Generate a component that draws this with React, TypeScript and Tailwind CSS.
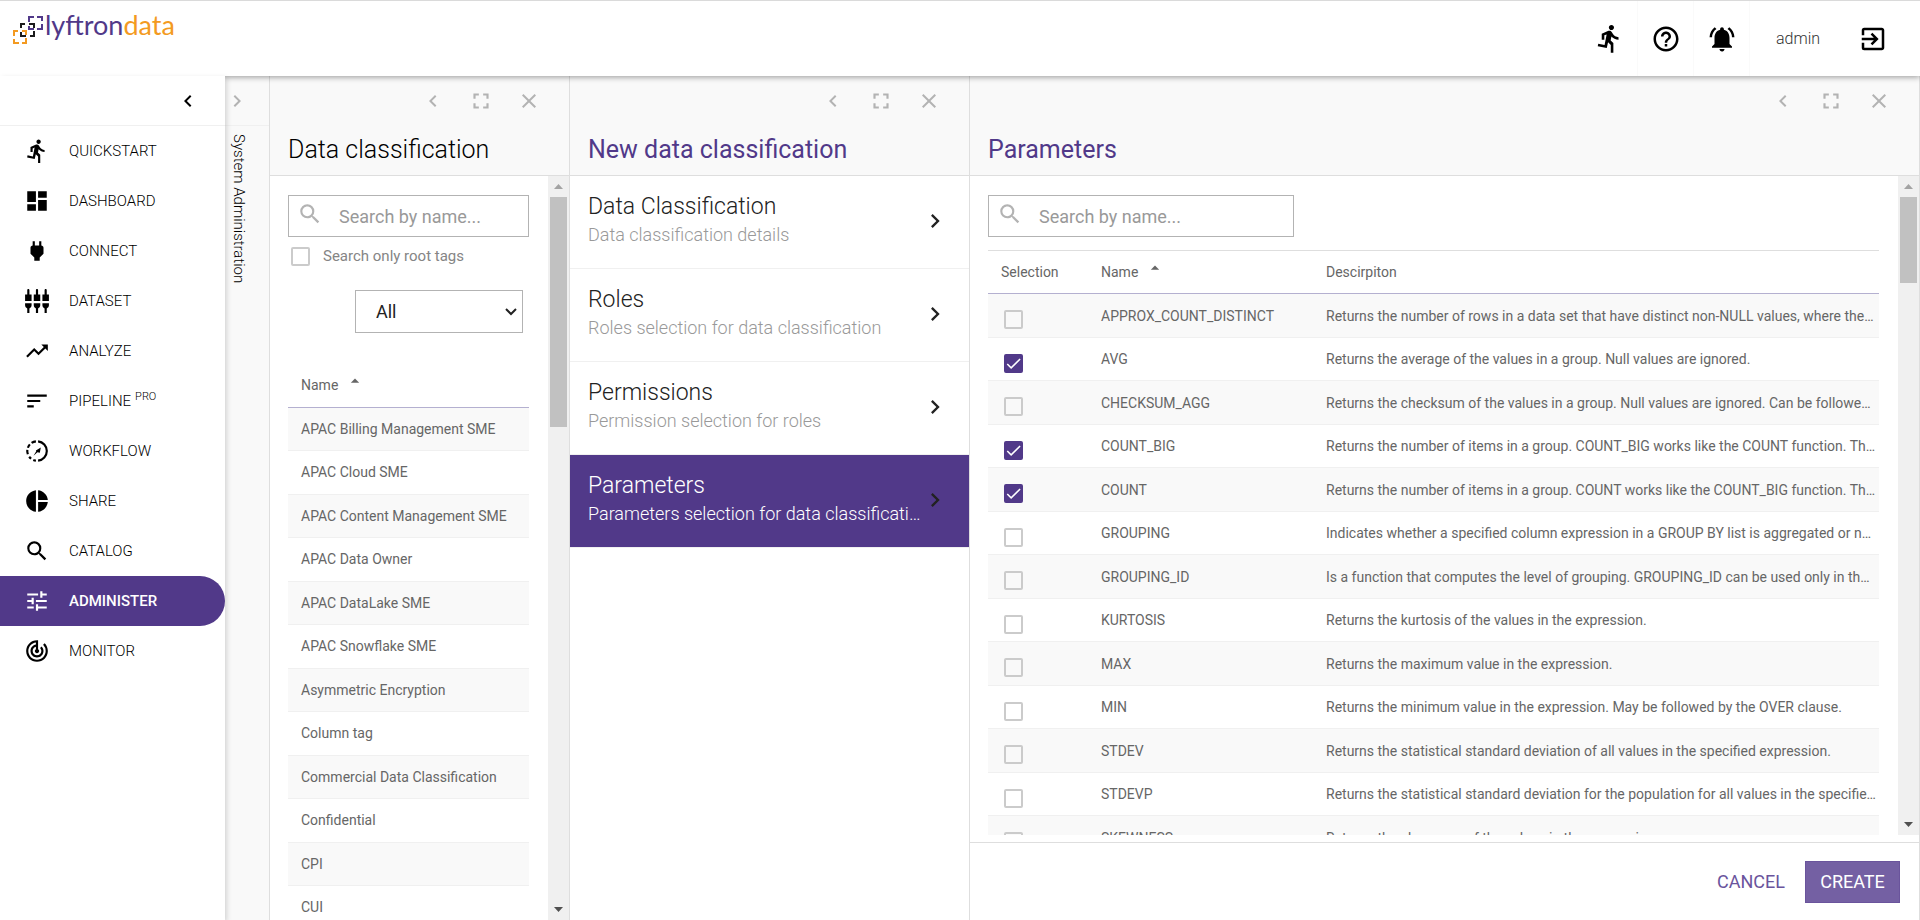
import { useState } from "react";
import {
  MdArrowDropUp,
  MdCheck,
  MdChevronLeft,
  MdChevronRight,
  MdClose,
  MdDashboard,
  MdDirectionsRun,
  MdExitToApp,
  MdFullscreen,
  MdHelpOutline,
  MdNotificationsActive,
  MdPieChart,
  MdPower,
  MdSearch,
  MdSettingsInputComponent,
  MdSort,
  MdTrackChanges,
  MdTrendingUp,
  MdTune,
} from "react-icons/md";
import clsx from "clsx";

const WorkflowIcon = ({ className }: { className?: string }) => (
  <svg viewBox="0 0 24 24" className={className} fill="none" stroke="currentColor" strokeWidth="2">
    <path d="M13 3.05a9 9 0 0 1 0 17.9" />
    <path d="M11 3.05a9 9 0 0 0-4 1.5M5.4 5.9A9 9 0 0 0 3.6 9M3.05 11a9 9 0 0 0 .5 4M4.8 17.3A9 9 0 0 0 6.6 19.1M8.6 20.3a9 9 0 0 0 2.4.65" />
    <path d="m15.5 8.7-.9 5-2.2-.5-3.6 3.2 2.5-4.2-.3-.7z" fill="currentColor" stroke="none" />
  </svg>
);

const navItems = [
  { label: "QUICKSTART", icon: MdDirectionsRun },
  { label: "DASHBOARD", icon: MdDashboard },
  { label: "CONNECT", icon: MdPower },
  { label: "DATASET", icon: MdSettingsInputComponent },
  { label: "ANALYZE", icon: MdTrendingUp },
  { label: "PIPELINE", icon: MdSort, badge: "PRO" },
  { label: "WORKFLOW", icon: WorkflowIcon },
  { label: "SHARE", icon: MdPieChart },
  { label: "CATALOG", icon: MdSearch },
  { label: "ADMINISTER", icon: MdTune },
  { label: "MONITOR", icon: MdTrackChanges },
];

const tags = [
  "APAC Billing Management SME",
  "APAC Cloud SME",
  "APAC Content Management SME",
  "APAC Data Owner",
  "APAC DataLake SME",
  "APAC Snowflake SME",
  "Asymmetric Encryption",
  "Column tag",
  "Commercial Data Classification",
  "Confidential",
  "CPI",
  "CUI",
];

const steps = [
  { title: "Data Classification", text: "Data classification details" },
  { title: "Roles", text: "Roles selection for data classification" },
  { title: "Permissions", text: "Permission selection for roles" },
  { title: "Parameters", text: "Parameters selection for data classification" },
];

const parameters = [
  { name: "APPROX_COUNT_DISTINCT", text: "Returns the number of rows in a data set that have distinct non-NULL values, where the expression is evaluated" },
  { name: "AVG", text: "Returns the average of the values in a group. Null values are ignored." },
  { name: "CHECKSUM_AGG", text: "Returns the checksum of the values in a group. Null values are ignored. Can be followed by the OVER clause." },
  { name: "COUNT_BIG", text: "Returns the number of items in a group. COUNT_BIG works like the COUNT function. The only difference is the type." },
  { name: "COUNT", text: "Returns the number of items in a group. COUNT works like the COUNT_BIG function. The only difference is the type." },
  { name: "GROUPING", text: "Indicates whether a specified column expression in a GROUP BY list is aggregated or not. GROUPING returns 1 or 0." },
  { name: "GROUPING_ID", text: "Is a function that computes the level of grouping. GROUPING_ID can be used only in the SELECT list." },
  { name: "KURTOSIS", text: "Returns the kurtosis of the values in the expression." },
  { name: "MAX", text: "Returns the maximum value in the expression." },
  { name: "MIN", text: "Returns the minimum value in the expression. May be followed by the OVER clause." },
  { name: "STDEV", text: "Returns the statistical standard deviation of all values in the specified expression." },
  { name: "STDEVP", text: "Returns the statistical standard deviation for the population for all values in the specified expression." },
  { name: "SKEWNESS", text: "Returns the skewness of the values in the expression." },
];

const Logo = () => (
  <a href="#" aria-label="lyftrondata" className="flex items-start pt-3 pl-3">
    <svg width="33" height="32" viewBox="0 0 33 32" fill="none" strokeWidth="2">
      <path d="M17 9V4h5M25 4h5v4M30 11v5h-5M22 16h-5v-3" stroke="#513989" />
      <path d="M9 15v-4h4M17 11h5v4M22 18v5h-4M14 23H9v-4" stroke="#1b1b1b" />
      <path d="M2 23v-5h4M14 25v5h-4M7 30H2v-4M10 18h4v4" stroke="#f39a21" />
    </svg>
    <span className="font-[Lato] text-[27px] leading-6 text-[#513989]">
      lyftron<span className="text-[#f39a21]">data</span>
    </span>
  </a>
);

const Checkbox = ({ label, checked, onChange, hideLabel }: any) => (
  <label className="flex items-center gap-[13px] text-[15px] leading-5 text-[#858585]">
    <span className="relative flex">
      <input
        type="checkbox"
        aria-label={label}
        checked={checked}
        onChange={onChange}
        className="peer size-[19px] appearance-none rounded-xs border-2 border-[#cbcbcb] checked:border-[#513989] checked:bg-[#513989]"
      />
      <MdCheck className="pointer-events-none absolute inset-0 hidden size-[19px] text-white peer-checked:block" />
    </span>
    {!hideLabel && label}
  </label>
);

const SearchBox = ({ className }: { className?: string }) => (
  <div className={clsx("flex h-[42px] items-center border border-[#b3b3b3] pl-2", className)}>
    <MdSearch className="mb-1 size-[26px] shrink-0 text-[#b3b3b3]" />
    <input
      type="text"
      aria-label="Search by name"
      placeholder="Search by name..."
      className="w-full min-w-0 pt-0.5 pl-4 text-lg leading-6 outline-none placeholder:text-[#999]"
    />
  </div>
);

const PanelHeader = ({ title, light }: { title: string; light?: boolean }) => (
  <div className="h-[100px] shrink-0 border-b border-[#dedede] bg-[#f9f9f9] pr-7 pl-[18px]">
    <div className="flex h-[50px] items-center justify-end gap-[23px] text-[#b3b3b3]">
      <button aria-label="Collapse"><MdChevronLeft className="size-6" /></button>
      <button aria-label="Fullscreen"><MdFullscreen className="size-[26px]" /></button>
      <button aria-label="Close"><MdClose className="size-6" /></button>
    </div>
    <h2 className={clsx("text-[25px] leading-[48px]", light ? "font-light text-black" : "font-normal text-[#513989]")}>
      {title}
    </h2>
  </div>
);

const ScrollBar = ({ thumb }: { thumb: string }) => (
  <div className="flex w-[21px] shrink-0 flex-col items-center bg-[#f0f0f0]">
    <span className="flex h-[21px] items-center">
      <svg width="9" height="5" viewBox="0 0 9 5" fill="#a3a3a3"><path d="M0 5 4.5 0 9 5z" /></svg>
    </span>
    <span className={clsx("w-[17px] bg-[#c1c1c1]", thumb)} />
    <span className="mt-auto flex h-[21px] items-center">
      <svg width="9" height="5" viewBox="0 0 9 5" fill="#505050"><path d="M0 0 4.5 5 9 0z" /></svg>
    </span>
  </div>
);

const SortLabel = () => (
  <button className="flex items-center gap-[9px]">
    Name <MdArrowDropUp className="mb-2 size-4 scale-125" />
  </button>
);

export default function App() {
  const [selected, setSelected] = useState(["AVG", "COUNT_BIG", "COUNT"]);
  const [rootOnly, setRootOnly] = useState(false);

  const toggle = (name: string) =>
    setSelected((prev) => (prev.includes(name) ? prev.filter((n) => n !== name) : [...prev, name]));

  return (
    <div className="flex h-screen flex-col overflow-hidden bg-white font-[Roboto,sans-serif]">
      {/* Top bar */}
      <header className="relative z-10 flex h-[76px] shrink-0 justify-between border-t border-[#dadada] bg-white shadow-[0_1px_6px_rgba(0,0,0,0.4)]">
        <Logo />
        <div className="flex items-stretch">
          <button aria-label="Quickstart" className="w-14 border-r border-[#fafafa] pl-3"><MdDirectionsRun className="size-[31px]" /></button>
          <button aria-label="Help" className="flex w-14 items-center justify-center border-r border-[#fafafa]"><MdHelpOutline className="size-[30px]" /></button>
          <button aria-label="Notifications" className="flex w-14 items-center justify-center border-r border-[#fafafa]"><MdNotificationsActive className="size-[30px]" /></button>
          <a href="#" className="flex w-24 items-center justify-center text-base font-light text-[#333]">admin</a>
          <button aria-label="Log out" className="flex w-[74px] items-center pl-3"><MdExitToApp className="size-[30px]" /></button>
        </div>
      </header>

      <div className="flex min-h-0 flex-1">
        {/* Main navigation */}
        <aside className="relative z-20 w-[225px] shrink-0 bg-white shadow-[2px_2px_5px_rgba(0,0,0,0.15)]">
          <div className="flex h-[50px] items-center justify-end border-b border-[#f0f0f0] pr-[25px]">
            <button aria-label="Collapse menu"><MdChevronLeft className="size-6" /></button>
          </div>
          <nav>
            {navItems.map(({ label, icon: Icon, badge }) => (
              <a
                key={label}
                href="#"
                className={clsx(
                  "flex h-[50px] items-center gap-[19px] pl-6 text-[15px]",
                  label === "ADMINISTER" ? "rounded-r-full bg-[#513989] font-medium text-white" : "font-light text-black"
                )}
              >
                <Icon className="size-[26px]" />
                <span>
                  {label}
                  {badge && <sup className="ml-1 text-[11px]">{badge}</sup>}
                </span>
              </a>
            ))}
          </nav>
        </aside>

        {/* Collapsed panel */}
        <section className="w-[45px] shrink-0 border-r border-[#dedede] bg-[#f9f9f9]">
          <div className="flex h-[50px] items-center border-b border-[#f0f0f0]">
            <button aria-label="Expand"><MdChevronRight className="size-6 text-[#b3b3b3]" /></button>
          </div>
          <h2 className="pt-2 pl-1 text-[15px] leading-5 font-light [writing-mode:vertical-rl]">System Administration</h2>
        </section>

        {/* Classification list */}
        <section className="flex w-[300px] shrink-0 flex-col border-r border-[#dedede]">
          <PanelHeader title="Data classification" light />
          <div className="flex min-h-0 flex-1">
            <div className="min-w-0 flex-1 overflow-hidden pt-[19px] pr-[19px] pl-[18px]">
              <SearchBox />
              <div className="pt-[9px] pl-[3px]">
                <Checkbox label="Search only root tags" checked={rootOnly} onChange={() => setRootOnly(!rootOnly)} />
              </div>
              <div className="relative mt-6 mr-[6px] ml-[67px]">
                <select aria-label="Filter" className="h-[43px] w-full appearance-none border border-[#b3b3b3] pl-5 text-lg text-[#222]">
                  <option>All</option>
                </select>
                <svg viewBox="0 0 12 8" className="pointer-events-none absolute top-[18px] right-[6px] h-2 w-3" fill="none" stroke="#222" strokeWidth="2">
                  <path d="m1 1 5 5 5-5" />
                </svg>
              </div>
              <table className="mt-[30px] w-full table-fixed text-left text-sm text-[#666]">
                <thead>
                  <tr className="h-11 border-b border-[#b4b0d0]">
                    <th className="pl-[13px] font-normal"><SortLabel /></th>
                  </tr>
                </thead>
                <tbody>
                  {tags.map((tag) => (
                    <tr key={tag} className="h-11 border-b border-[#f0f0f0] odd:h-[43px] odd:bg-[#f9f9f9]">
                      <td className="pl-[13px] whitespace-nowrap">{tag}</td>
                    </tr>
                  ))}
                </tbody>
              </table>
            </div>
            <ScrollBar thumb="h-[230px]" />
          </div>
        </section>

        {/* Steps */}
        <section className="w-[400px] shrink-0 border-r border-[#dedede]">
          <PanelHeader title="New data classification" />
          {steps.map(({ title, text }) => {
            const active = title === "Parameters";
            return (
              <button
                key={title}
                className={clsx(
                  "flex h-[93px] w-full items-center border-b border-[#f0f0f0] pr-5 pb-0.5 pl-[18px] text-left font-light",
                  active ? "bg-[#513989] text-white" : "text-[#222]"
                )}
              >
                <span className="min-w-0 flex-1">
                  <span className="block text-[23px] leading-7">{title}</span>
                  <span className={clsx("block truncate text-lg leading-7", active ? "text-white" : "text-[#999]")}>{text}</span>
                </span>
                <MdChevronRight className="size-7 shrink-0 text-[#222]" />
              </button>
            );
          })}
        </section>

        {/* Parameter selection */}
        <section className="flex min-w-0 flex-1 flex-col border-r border-[#dedede]">
          <PanelHeader title="Parameters" />
          <div className="flex min-h-0 flex-1">
            <div className="min-w-0 flex-1 overflow-hidden pt-[19px] pr-[19px] pl-[18px]">
              <SearchBox className="w-[306px]" />
              <table className="mt-[13px] w-full table-fixed text-left text-sm text-[#666]">
                <thead>
                  <tr className="h-[43px] border-t border-b border-t-[#dedede] border-b-[#b4b0d0]">
                    <th className="w-[100px] pl-[13px] font-normal">Selection</th>
                    <th className="w-[225px] pl-[13px] font-normal"><SortLabel /></th>
                    <th className="pl-[13px] font-normal">Descirpiton</th>
                  </tr>
                </thead>
                <tbody>
                  {parameters.map(({ name, text }) => (
                    <tr key={name} className="h-[43px] border-b border-[#f0f0f0] odd:h-11 odd:bg-[#f9f9f9]">
                      <td className="pt-2 pl-4">
                        <Checkbox label={name} hideLabel checked={selected.includes(name)} onChange={() => toggle(name)} />
                      </td>
                      <td className="pl-[13px]">{name}</td>
                      <td className="truncate pr-[3px] pl-[13px]">{text}</td>
                    </tr>
                  ))}
                </tbody>
              </table>
            </div>
            <ScrollBar thumb="h-[86px]" />
          </div>
          <div className="mt-[7px] flex h-[78px] shrink-0 items-center justify-end gap-5 border-t border-[#dedede] pr-[19px] text-lg">
            <button className="text-[#6a549c]">CANCEL</button>
            <button className="h-[42px] w-[95px] border border-[#6a549c] bg-[#7460a3] text-white">CREATE</button>
          </div>
        </section>
      </div>
    </div>
  );
}
